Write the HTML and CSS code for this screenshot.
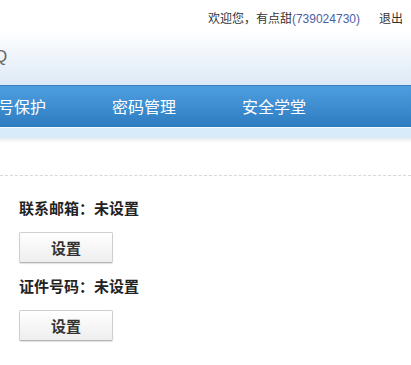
FILE: index.html
```html
<!DOCTYPE html>
<html lang="zh-CN">
<head>
    <meta charset="UTF-8" />
    <meta name="viewport" content="width=device-width, initial-scale=1.0" />
    <title>QQ安全中心</title>
    <link rel="stylesheet" href="styles.css">
</head>
<body>
    <div class="topbar">
        <span class="welcome">欢迎您，有点甜<span class="qq">(739024730)</span></span>
        <a class="logout" href="#">退出</a>
    </div>
    <div class="header">
        <span class="logo">Q</span>
    </div>
    <div class="nav">
        <a href="#">帐号保护</a>
        <a href="#">密码管理</a>
        <a href="#">安全学堂</a>
    </div>
    <div class="subnav"></div>
    <div class="shade"></div>

    <div class="content">
        <div class="item">
            <p class="label">联系邮箱：未设置</p>
            <button class="btn">设置</button>
        </div>
        <div class="item">
            <p class="label">证件号码：未设置</p>
            <button class="btn">设置</button>
        </div>
    </div>
</body>
</html>
```

FILE: styles.css
```css
body {
    margin: 0;
    padding: 0;
    overflow: hidden;
    background: #fff;
    font-family: "Noto Sans CJK SC", "Liberation Sans", sans-serif;
    color: #333;
}
a {
    text-decoration: none;
}
.topbar {
    height: 30px;
    box-sizing: border-box;
    padding: 10px 8px 0 0;
    display: flex;
    justify-content: flex-end;
    gap: 19px;
    font-size: 12px;
    line-height: 16px;
}
.welcome {
    color: #333;
}
.qq {
    color: #4a5ea6;
    font-family: "Liberation Sans", sans-serif;
}
.logout {
    color: #333;
}
.header {
    height: 55px;
    background: linear-gradient(#ffffff, #dde9f6);
    overflow: hidden;
}
.logo {
    display: block;
    margin: 17px 0 0 -6px;
    font-family: "Liberation Sans", sans-serif;
    font-size: 17px;
    line-height: 20px;
    color: #666;
}
.nav {
    height: 41px;
    border-top: 1px solid #3c7fbe;
    border-bottom: 1px solid #f4faff;
    background: linear-gradient(#4d9ee0, #2e7cc0);
    display: flex;
    margin-left: 0;
    overflow: hidden;
}
.nav a {
    flex: 0 0 130px;
    text-align: center;
    color: #fff;
    font-size: 16px;
    line-height: 41px;
}
.nav a:first-child {
    margin-left: -51px;
}
.subnav {
    height: 10px;
    background: #d8ebfb;
}
.shade {
    height: 5px;
    background: linear-gradient(#e6ebee, #fff);
}
.content {
    margin-top: 32px;
    border-top: 1px dashed #d8d8d8;
    padding: 22px 0 0 19px;
}
.item {
    margin-bottom: 13px;
}
.label {
    margin: 0 0 14px;
    font-size: 15px;
    font-weight: bold;
    line-height: 20px;
    color: #222;
}
.btn {
    display: block;
    width: 94px;
    height: 31px;
    padding: 0;
    border: 1px solid #cfcfcf;
    border-bottom-color: #b5b5b5;
    border-radius: 2px;
    background: linear-gradient(#ffffff, #eeeeee);
    box-shadow: 0 1px 1px rgba(0, 0, 0, 0.12);
    font-family: "Noto Sans CJK SC", sans-serif;
    font-size: 15px;
    font-weight: bold;
    color: #333;
    cursor: pointer;
}
```
